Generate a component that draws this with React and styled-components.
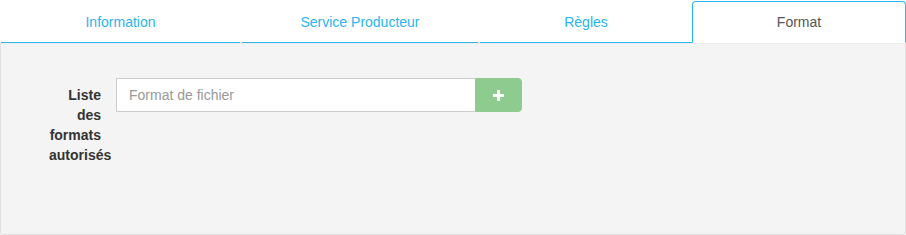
import * as React from 'react';
import styled, {createGlobalStyle, css} from 'styled-components';

const GlobalStyle = createGlobalStyle`
    html, body {
        margin: 0;
        padding: 0;
        background: #fff;
        font-family: "Liberation Sans", Arial, sans-serif;
        font-size: 14px;
        color: #333;
    }
`;

const tabs = [
    {label: 'Information', width: 239, gap: 2},
    {label: 'Service Producteur', width: 236, gap: 2},
    {label: 'Règles', width: 212, gap: 0},
    {label: 'Format', width: 214, gap: 0, active: true}
];

export default function App() {
    return (
        <Root>
            <GlobalStyle />
            <TabBar>
                {tabs.map(tab => (
                    <Tab key={tab.label} $width={tab.width} $gap={tab.gap} $active={tab.active}>
                        {tab.label}
                    </Tab>
                ))}
            </TabBar>
            <Panel>
                <FormRow>
                    <Label>Liste des formats autorisés</Label>
                    <InputGroup>
                        <Input placeholder="Format de fichier" />
                        <AddButton type="button" aria-label="Ajouter">
                            <svg width="11" height="11" viewBox="0 0 11 11">
                                <path d="M4 0h3v4h4v3H7v4H4V7H0V4h4z" fill="#fff" />
                            </svg>
                        </AddButton>
                    </InputGroup>
                </FormRow>
            </Panel>
        </Root>
    );
}

const Root = styled.div`
    width: 906px;
    padding-top: 1px;
`;

const TabBar = styled.ul`
    display: flex;
    margin: 0;
    padding: 0 0 0 1px;
    list-style: none;
`;

const Tab = styled.li`
    flex: 0 0 ${props => props.$width}px;
    margin-right: ${props => props.$gap}px;
    box-sizing: border-box;
    height: 42px;
    display: flex;
    align-items: center;
    justify-content: center;
    color: #2ab5ef;
    border-bottom: 1px solid #2ab5ef;
    cursor: pointer;
    ${props => props.$active && css`
        color: #555;
        background: #fff;
        border: 1px solid #2ab5ef;
        border-bottom-color: transparent;
        border-radius: 4px 4px 0 0;
    `};
`;

const Panel = styled.div`
    box-sizing: border-box;
    height: 192px;
    background: #f4f4f4;
    border: 1px solid #e0e0e0;
    border-top-color: #ececec;
    border-radius: 0 0 3px 3px;
    padding: 34px 0 0 48px;
`;

const FormRow = styled.div`
    display: flex;
    align-items: flex-start;
    gap: 15px;
`;

const Label = styled.label`
    width: 52px;
    padding-top: 7px;
    text-align: right;
    font-weight: bold;
    line-height: 20px;
    color: #333;
`;

const InputGroup = styled.div`
    display: flex;
    height: 34px;
`;

const Input = styled.input`
    box-sizing: border-box;
    width: 359px;
    height: 34px;
    padding: 6px 12px;
    border: 1px solid #ccc;
    border-right: none;
    background: #fff;
    font-family: inherit;
    font-size: 14px;
    color: #555;
    outline: none;
    &::placeholder {
        color: #999;
    }
`;

const AddButton = styled.button`
    box-sizing: border-box;
    width: 47px;
    height: 34px;
    display: flex;
    align-items: center;
    justify-content: center;
    border: 1px solid #8ecb8e;
    border-radius: 0 4px 4px 0;
    background: #8ecb8e;
    padding: 0;
    cursor: pointer;
`;
